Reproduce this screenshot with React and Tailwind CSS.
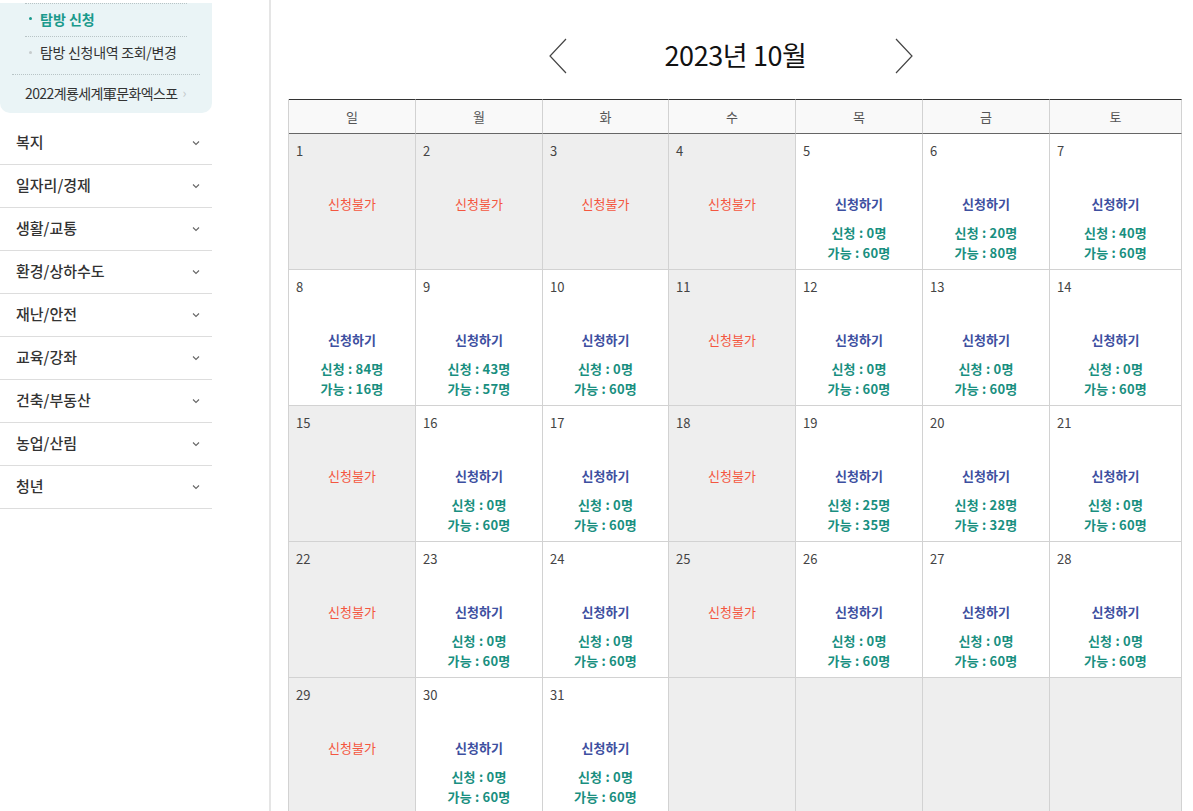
import React from 'react';

const font = { fontFamily: '"Noto Sans CJK KR", "Noto Sans", sans-serif' };

const menus = ['복지', '일자리/경제', '생활/교통', '환경/상하수도', '재난/안전', '교육/강좌', '건축/부동산', '농업/산림', '청년'];
const weekdays = ['일', '월', '화', '수', '목', '금', '토'];

// null = 신청불가, [applied, available] = open day
const days = {
  1: null, 2: null, 3: null, 4: null, 5: [0, 60], 6: [20, 80], 7: [40, 60],
  8: [84, 16], 9: [43, 57], 10: [0, 60], 11: null, 12: [0, 60], 13: [0, 60], 14: [0, 60],
  15: null, 16: [0, 60], 17: [0, 60], 18: null, 19: [25, 35], 20: [28, 32], 21: [0, 60],
  22: null, 23: [0, 60], 24: [0, 60], 25: null, 26: [0, 60], 27: [0, 60], 28: [0, 60],
  29: null, 30: [0, 60], 31: [0, 60],
};

function Chevron({ dir }) {
  return (
    <svg width="20" height="36" viewBox="0 0 20 36" className="shrink-0">
      {dir === 'left'
        ? <polyline points="18,1 2,18 18,35" fill="none" stroke="#444" strokeWidth="1.2" />
        : <polyline points="2,1 18,18 2,35" fill="none" stroke="#444" strokeWidth="1.2" />}
    </svg>
  );
}

function Sidebar() {
  return (
    <aside className="w-[271px] shrink-0 border-r-2 border-[#e5e5e5] min-h-[811px]">
      <div className="w-[212px]">
        {/* sub menu box */}
        <div className="bg-[#eaf4f6] rounded-b-[10px]">
          <div className="mx-[25px] border-t border-dotted border-[#b8c4c6] mt-[3px]" />
          <div className="flex items-center h-[32px] pb-[3px] pl-[29px] text-[14px] leading-[18px] font-semibold text-[#1a9a8c]">
            <span className="w-[3px] h-[3px] rounded-full bg-[#1a9a8c] mr-[8px]" />
            탐방 신청
          </div>
          <div className="mx-[25px] border-t border-dotted border-[#b8c4c6]" />
          <div className="flex items-center h-[37px] pb-[7px] pl-[29px] text-[14px] leading-[18px] text-[#333] tracking-[-0.3px]">
            <span className="w-[3px] h-[3px] rounded-full bg-[#c6cccd] mr-[8px]" />
            탐방 신청내역 조회/변경
          </div>
          <div className="mx-[12px] border-t border-dotted border-[#b8c4c6]" />
          <div className="flex items-center h-[38px] pb-[2px] pl-[25px] text-[14px] leading-[18px] text-[#333] tracking-[-0.6px]">
            2022계룡세계軍문화엑스포
            <span className="ml-[5px] text-[#c4c9ca] text-[13px]">›</span>
          </div>
        </div>

        {/* main menu */}
        <ul className="mt-[9px]">
          {menus.map((m) => (
            <li key={m} className="flex items-center justify-between h-[43px] pl-[16px] pr-[12px] border-b border-[#dddddd] text-[15px] leading-[20px] font-medium text-[#333]">
              <span className="-mt-[3px]">{m}</span>
              <svg width="8" height="6" viewBox="0 0 8 6">
                <polyline points="1,1.5 4,4.5 7,1.5" fill="none" stroke="#666" strokeWidth="1.1" />
              </svg>
            </li>
          ))}
        </ul>
      </div>
    </aside>
  );
}

function DayCell({ day }) {
  if (day == null) {
    return <div className="h-[136px] bg-[#eeeeee] border-r border-b border-[#d2d2d2]" />;
  }
  const info = days[day];
  const closed = info === null;
  return (
    <div className={`h-[136px] border-r border-b border-[#d2d2d2] flex flex-col ${closed ? 'bg-[#eeeeee]' : 'bg-white'}`}>
      <div className="pt-[8px] pl-[7px] text-[13px] text-[#444] leading-[18px]">{day}</div>
      {closed ? (
        <div className="mt-[35px] text-center text-[13px] text-[#f4563f] leading-[18px]">신청불가</div>
      ) : (
        <div className="mt-[35px] flex flex-col items-center">
          <div className="text-[13px] font-semibold text-[#3d4fa0] leading-[18px]">신청하기</div>
          <div className="mt-[10px] text-[13px] font-bold text-[#198f80] leading-[20px] tracking-[0.2px]">신청 : {info[0]}명</div>
          <div className="text-[13px] font-bold text-[#198f80] leading-[20px] tracking-[0.2px]">가능 : {info[1]}명</div>
        </div>
      )}
    </div>
  );
}

function Calendar() {
  const cells = [];
  for (let d = 1; d <= 35; d++) cells.push(d <= 31 ? d : null);

  return (
    <main className="flex-1 pl-[17px] pr-[11px]">
      <div className="flex items-center justify-center h-[99px] pt-[12px] pr-[8px]">
        <Chevron dir="left" />
        <div className="ml-[96px] mr-[87px] text-[27px] text-[#111] tracking-[-0.4px]">2023년 10월</div>
        <Chevron dir="right" />
      </div>

      <div className="grid grid-cols-[127px_127px_126px_127px_127px_127px_1fr] w-[894px] border-l border-[#d2d2d2]">
        {weekdays.map((w) => (
          <div key={w} className="h-[35px] flex items-center justify-center bg-[#f9f9f9] border-t border-t-[#333] border-b border-b-[#666] border-r border-r-[#d2d2d2] text-[13px] text-[#555]">
            {w}
          </div>
        ))}
        {cells.map((d, i) => (
          <DayCell key={i} day={d} />
        ))}
      </div>
    </main>
  );
}

export default function App() {
  return (
    <div className="flex w-[1193px] h-[811px] overflow-hidden bg-white" style={font}>
      <Sidebar />
      <Calendar />
    </div>
  );
}
